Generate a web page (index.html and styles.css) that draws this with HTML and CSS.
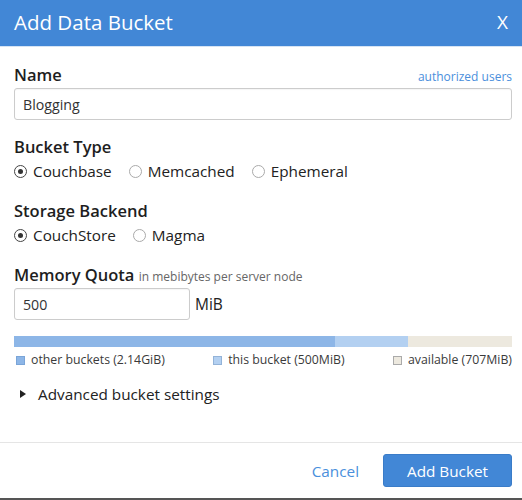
FILE: index.html
```html
<!DOCTYPE html>
<html>
<head>
<meta charset="utf-8">
<link rel="stylesheet" href="styles.css">
</head>
<body>
<div class="modal">
  <div class="header">
    <h1>Add Data Bucket</h1>
    <span class="close">X</span>
  </div>
  <div class="body">
    <div class="label-row">
      <label class="lbl">Name</label>
      <a class="link">authorized users</a>
    </div>
    <div class="input wide">Blogging</div>

    <div class="lbl sec">Bucket Type</div>
    <div class="radios">
      <span class="radio"><span class="dot on"></span>Couchbase</span>
      <span class="radio"><span class="dot"></span>Memcached</span>
      <span class="radio"><span class="dot"></span>Ephemeral</span>
    </div>

    <div class="lbl sec-storage">Storage Backend</div>
    <div class="radios">
      <span class="radio"><span class="dot on"></span>CouchStore</span>
      <span class="radio"><span class="dot"></span>Magma</span>
    </div>

    <div class="lbl sec-quota">Memory Quota <small>in mebibytes per server node</small></div>
    <div class="quota-row">
      <div class="input narrow">500</div>
      <span class="unit">MiB</span>
    </div>

    <div class="bar">
      <div class="seg other"></div>
      <div class="seg this"></div>
      <div class="seg avail"></div>
    </div>
    <div class="legend">
      <span class="key"><i class="sw other"></i>other buckets (2.14GiB)</span>
      <span class="key"><i class="sw this"></i>this bucket (500MiB)</span>
      <span class="key"><i class="sw avail"></i>available (707MiB)</span>
    </div>

    <div class="advanced"><span class="tri"></span>Advanced bucket settings</div>
  </div>
  <div class="footer">
    <a class="cancel">Cancel</a>
    <button class="primary">Add Bucket</button>
  </div>
</div>
</body>
</html>
```
FILE: styles.css
```css
* { box-sizing: border-box; }
html, body { margin: 0; padding: 0; background: #fff; }
body { font-family: "Open Sans", "Liberation Sans", sans-serif; color: #222; width: 522px; height: 500px; overflow: hidden; }
.modal { height: 500px; display: flex; flex-direction: column; border-bottom: 2px solid #555; }
.header { height: 47px; flex: none; background: #4287d6; border-bottom: 1px solid #d6e4f4; display: flex; align-items: center; justify-content: space-between; padding: 0 14px 0 14px; }
.header h1 { margin: 0; font-size: 20.5px; font-weight: 400; color: #fff; line-height: 1; padding-bottom: 2px; }
.close { color: #fff; font-size: 19px; line-height: 1; padding-bottom: 2px; }
.body { padding: 17px 10px 0 14px; flex: 1; }
.label-row { display: flex; justify-content: space-between; align-items: baseline; }
.lbl { font-size: 16.5px; font-weight: 600; line-height: 22px; color: #1e1e1e; }
.link { font-size: 12px; color: #4a8fdc; }
.input { border: 1px solid #ccc; border-radius: 3px; height: 32px; padding: 0 8px; display: flex; align-items: center; font-size: 14.2px; color: #333; box-shadow: inset 0 1px 1px rgba(0,0,0,0.04); }
.wide { margin-top: 2px; width: 498px; }
.sec { margin-top: 16px; }
.sec-storage { margin-top: 18px; }
.sec-quota { margin-top: 18px; }
.radios { display: flex; gap: 17px; font-size: 15.3px; line-height: 22px; margin-top: 2px; }
.radio { display: flex; align-items: center; }
.dot { width: 13px; height: 13px; border: 1px solid #aaa; border-radius: 50%; margin-right: 6px; display: inline-flex; align-items: center; justify-content: center; }
.dot.on { border: 1.5px solid #444; }
.dot.on::after { content: ""; width: 5px; height: 5px; border-radius: 50%; background: #333; }
.lbl small { font-size: 12px; font-weight: 400; color: #666; }
.quota-row { display: flex; align-items: center; margin-top: 0; }
.narrow { width: 176px; }
.unit { font-size: 15.5px; margin-left: 5px; }
.bar { display: flex; height: 11px; margin-top: 16px; width: 498px; }
.seg.other { width: 321px; background: #8db6e7; }
.seg.this { width: 73px; background: #b3d0f1; }
.seg.avail { flex: 1; background: #ede9df; }
.legend { display: flex; justify-content: space-between; width: 498px; font-size: 12.3px; color: #3a3a3a; margin-top: 4px; line-height: 18px; padding-left: 2px; }
.key { display: flex; align-items: center; }
.sw { width: 9px; height: 9px; border: 1px solid #999; margin-right: 6px; display: inline-block; }
.sw.other { background: #8db6e7; border-color: #7aa5d8; }
.sw.this { background: #b3d0f1; border-color: #93b3d8; }
.sw.avail { background: #ede9df; border-color: #aaa; }
.advanced { display: flex; align-items: center; font-size: 15.3px; margin-top: 14px; line-height: 22px; }
.tri { width: 0; height: 0; border-top: 4.5px solid transparent; border-bottom: 4.5px solid transparent; border-left: 6px solid #222; margin: 0 12px 0 6px; }
.footer { flex: none; border-top: 1px solid #e5e5e5; height: 56px; display: flex; align-items: center; justify-content: flex-end; padding: 0 10px 0 0; gap: 24px; }
.cancel { color: #4a8fdc; font-size: 15.3px; }
.primary { background: #4287d6; color: #fff; border: 1px solid #3a7cc8; border-radius: 3px; width: 129px; height: 33px; font-family: inherit; font-size: 15.3px; }
```
